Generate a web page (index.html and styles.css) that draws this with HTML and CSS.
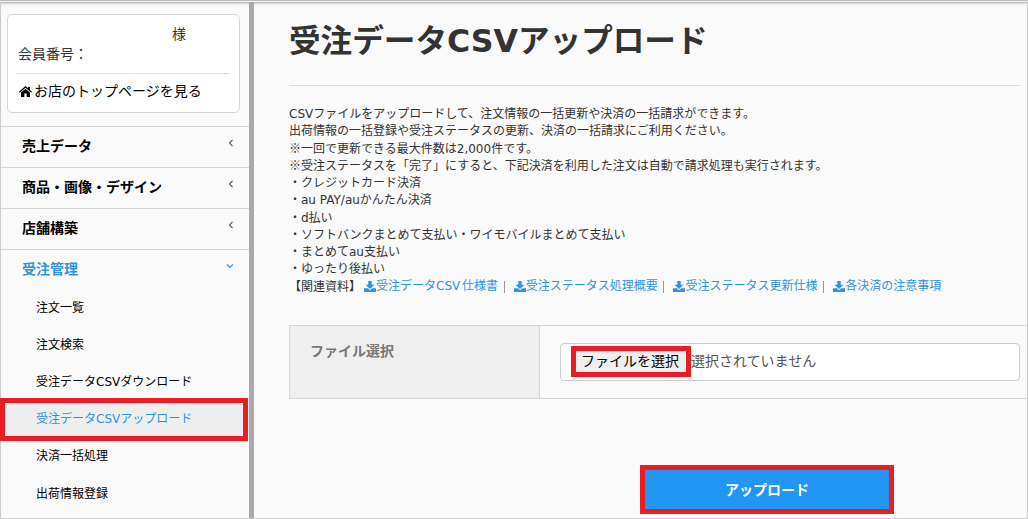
FILE: index.html
```
<!DOCTYPE html>
<html lang="ja">

<head>
    <meta charset="utf-8">
    <title>受注データCSVアップロード</title>
    <link rel="stylesheet" href="styles.css">
</head>

<body>
    <svg class="defs" width="0" height="0">
        <symbol id="download" viewBox="0 0 12 11">
            <path d="M4.3 0h3.4v3.7h2.7L6 7.9 1.6 3.7h2.7z"/>
            <path d="M0 7.3h3.8L6 9.3l2.2-2H12V11H0z"/>
        </symbol>
    </svg>
    <div class="page">
        <div class="sidebar">
            <div class="member">
                <div class="member-name">様</div>
                <div class="member-no">会員番号：</div>
                <a class="shop-link" href="#"><svg class="home" viewBox="0 0 13 11"><path d="M6.5 0L9 2.2V.8h2v3.2l2 1.8-.8.9L6.5 1.7.8 6.7 0 5.8z"/><path d="M6.5 2.7L11 6.6V11H7.7V7.6H5.3V11H2V6.6z"/></svg>お店のトップページを見る</a>
            </div>
            <ul class="menu">
                <li><a href="#">売上データ</a><svg class="arrow" viewBox="0 0 8 8"><path d="M5.5 .8L2.5 4l3 3.2"/></svg></li>
                <li><a href="#">商品・画像・デザイン</a><svg class="arrow" viewBox="0 0 8 8"><path d="M5.5 .8L2.5 4l3 3.2"/></svg></li>
                <li><a href="#">店舗構築</a><svg class="arrow" viewBox="0 0 8 8"><path d="M5.5 .8L2.5 4l3 3.2"/></svg></li>
                <li class="open"><a href="#">受注管理</a><svg class="arrow" viewBox="0 0 8 8"><path d="M1 2.5l3 3 3-3"/></svg></li>
            </ul>
            <ul class="submenu">
                <li><a href="#">注文一覧</a></li>
                <li><a href="#">注文検索</a></li>
                <li><a href="#">受注データCSVダウンロード</a></li>
                <li class="current"><a href="#">受注データCSVアップロード</a></li>
                <li><a href="#">決済一括処理</a></li>
                <li><a href="#">出荷情報登録</a></li>
            </ul>
        </div>
        <div class="main">
            <h1>受注データCSVアップロード</h1>
            <div class="text">
                CSVファイルをアップロードして、注文情報の一括更新や決済の一括請求ができます。<br>
                出荷情報の一括登録や受注ステータスの更新、決済の一括請求にご利用ください。<br>
                <span class="mark">※</span>一回で更新できる最大件数は2,000件です。<br>
                <span class="mark">※</span>受注ステータスを「完了」にすると、下記決済を利用した注文は自動で請求処理も実行されます。<br>
                ・クレジットカード決済<br>
                ・au PAY/auかんたん決済<br>
                ・d払い<br>
                ・ソフトバンクまとめて支払い・ワイモバイルまとめて支払い<br>
                ・まとめてau支払い<br>
                ・ゆったり後払い
            </div>
            <div class="docs">
                <span class="docs-title">【関連資料】</span>
                <a href="#"><svg class="dl"><use href="#download"/></svg>受注データCSV 仕様書</a>
                <a href="#"><svg class="dl"><use href="#download"/></svg>受注ステータス処理概要</a>
                <a href="#"><svg class="dl"><use href="#download"/></svg>受注ステータス更新仕様</a>
                <a href="#"><svg class="dl"><use href="#download"/></svg>各決済の注意事項</a>
            </div>
            <div class="row">
                <div class="label">ファイル選択</div>
                <div class="field">
                    <div class="file">
                        <button class="choose">ファイルを選択</button>
                        <span>選択されていません</span>
                    </div>
                </div>
            </div>
            <button class="upload">アップロード</button>
        </div>
    </div>
</body>

</html>
```
FILE: styles.css
```
* {
    box-sizing: border-box;
}
body {
    margin: 0;
    color: #333;
    background: #fafafa;
    font-family: "DejaVu Sans", "Noto Sans CJK JP", sans-serif;
    font-size: 12px;
    line-height: 17.14px;
    overflow: hidden;
}
a {
    color: #000;
    text-decoration: none;
}
ul {
    list-style: none;
    margin: 0;
    padding: 0;
}
button {
    font-family: inherit;
    padding: 0;
}
.defs {
    position: absolute;
}
.page {
    display: flex;
    height: 519px;
    border: 1px solid #ccc;
    border-top-color: #bbb;
    border-left: 0;
    box-shadow: inset 0 1px 0 #f4f4f4, inset 0 2px 0 #bbb, inset 0 3px 0 #ddd, inset 0 5px 3px #eee;
    overflow: hidden;
}

/* sidebar */
.sidebar {
    width: 254px;
    flex: none;
    border-left: 1px solid #ccc;
    border-right: 5px solid #aaa;
    padding-top: 13px;
    margin-top: 1px;
    height: 516px;
}
.member {
    width: 233px;
    height: 99px;
    margin: -1px 0 13px 6px;
    padding: 9px 10px 0;
    background: #fff;
    border: 1px solid #d6d6d6;
    border-radius: 5px;
    font-size: 14px;
    line-height: 20px;
}
.member-name {
    padding-left: 154px;
}
.member-no {
    width: 213px;
    height: 30px;
    margin-left: -2px;
    padding-left: 2px;
    border-bottom: 1px solid #ddd;
}
.shop-link {
    display: flex;
    align-items: center;
    height: 34px;
}
.home {
    width: 13px;
    height: 11px;
    margin: 0 2px 0 1px;
}
.menu li {
    display: flex;
    justify-content: space-between;
    height: 41px;
    padding: 9px 14px 0 21px;
    border-top: 1px solid #d6d6d6;
    font-size: 14px;
    line-height: 20px;
}
.menu a {
    font-weight: bold;
}
.menu .open a {
    color: #2f93e0;
}
.arrow {
    width: 8px;
    height: 8px;
    margin-top: 3px;
    fill: none;
    stroke: #555;
    stroke-width: 1.1;
}
.open .arrow {
    margin-right: 1px;
    stroke: #2f93e0;
}
.submenu li {
    height: 37.14px;
    padding: 10px 0 0 35px;
}
.submenu .current {
    height: 43px;
    margin: -3px 1px -3px -1px;
    padding: 8px 0 0 31px;
    background: #eee;
    border: 5px solid #ea1c24;
}
.current a {
    color: #2f93e0;
}

/* main */
.main {
    flex: 1;
    min-width: 0;
    padding-left: 35px;
}
h1 {
    height: 85px;
    margin: 0 7px 20px 0;
    padding-top: 20px;
    border-bottom: 1px solid #ddd;
    font-size: 31.6px;
    line-height: 40px;
    white-space: nowrap;
}
.text {
    line-height: 17.25px;
}
.mark {
    font-family: "Noto Sans CJK JP", sans-serif;
    line-height: 1;
}
.docs {
    display: flex;
    height: 17px;
    white-space: nowrap;
}
.docs-title {
    margin-right: 3px;
}
.docs a {
    color: #2f93e0;
    display: flex;
    align-items: center;
    word-spacing: -2px;
}
.docs a + a:before {
    content: "";
    height: 12px;
    border-left: 1px solid #999;
    margin: 0 9px 0 5.7px;
}
.dl {
    width: 12px;
    height: 11px;
    margin-bottom: 2px;
    fill: #2f93e0;
}
.row {
    display: flex;
    height: 74px;
    margin-top: 29.5px;
    border: 1px solid #d6d6d6;
    border-right: 0;
    font-size: 14px;
}
.label {
    width: 250px;
    padding: 17px 20px;
    background: #efefef;
    border-right: 1px solid #d6d6d6;
    color: #777;
    font-weight: bold;
}
.field {
    flex: 1;
    padding: 17px 7px 0 20px;
}
.file {
    display: flex;
    align-items: center;
    height: 38px;
    padding: 0 0 1px 10px;
    background: #fff;
    border: 1px solid #ccc;
    border-radius: 4px;
    color: #555;
}
.choose {
    width: 120px;
    height: 31px;
    padding: 0 2px 1px 0;
    background: #efefef;
    border: 5px solid #ea1c24;
    font-size: 14px;
    line-height: 20px;
}
.upload {
    display: block;
    width: 254px;
    height: 49px;
    margin: 66px 0 0 351px;
    padding-bottom: 1px;
    background: #2196f3;
    border: 5px solid #ea1c24;
    color: #fff;
    font-size: 14px;
    font-weight: bold;
}
```
